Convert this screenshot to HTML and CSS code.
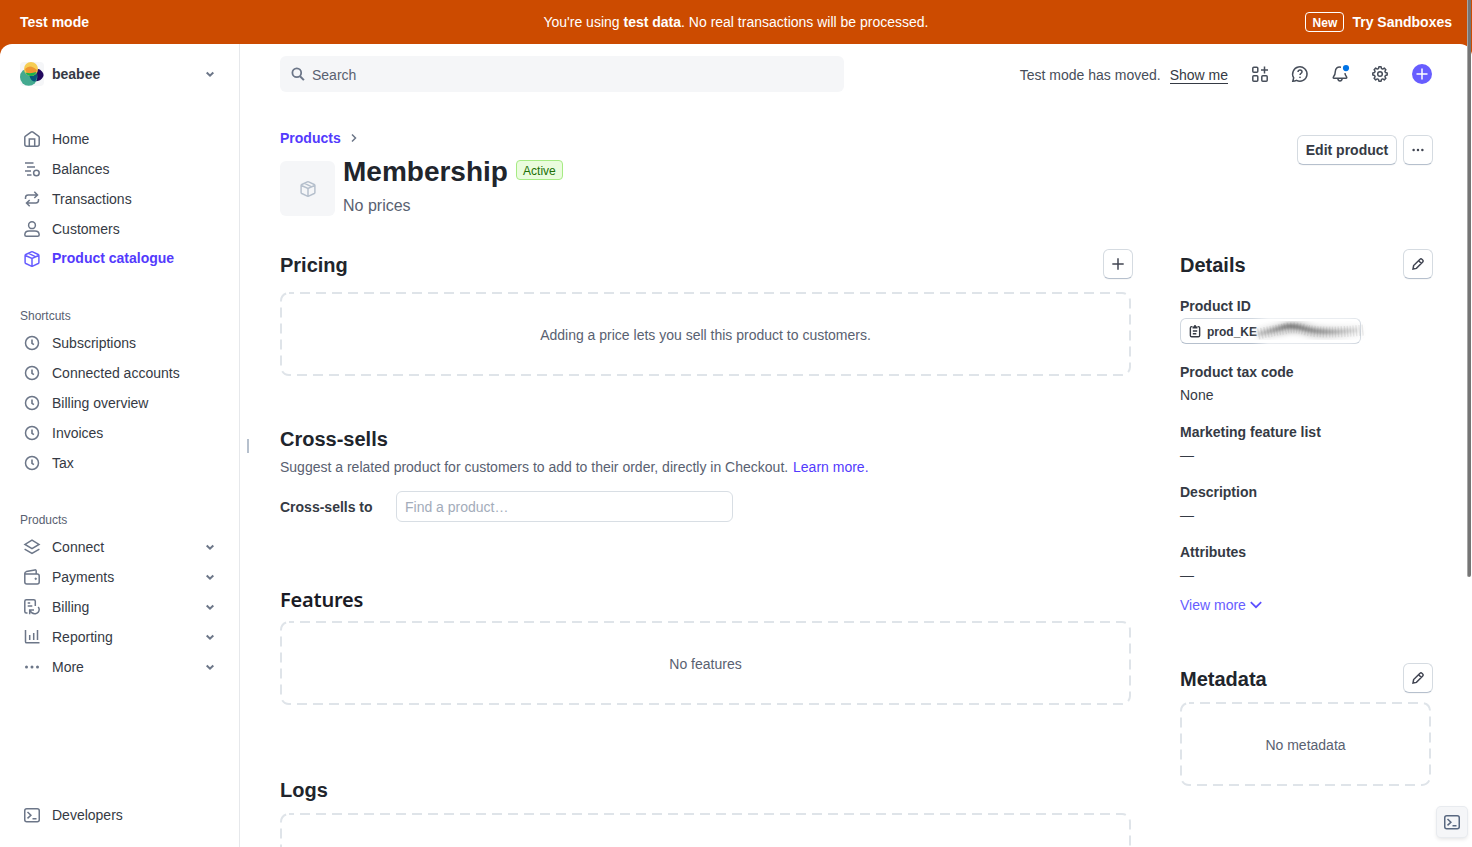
FILE: index.html
```html
<!DOCTYPE html>
<html lang="en">
<head>
<meta charset="utf-8">
<title>Membership – Products</title>
<link rel="stylesheet" href="styles.css">
</head>
<body>
<svg class="defs" width="0" height="0" aria-hidden="true">
  <symbol id="chev" viewBox="0 0 16 16"><path d="M4.700 6.500 8 9.700l3.300-3.200" stroke-width="2"/></symbol>
  <symbol id="clock" viewBox="0 0 16 16"><circle cx="8" cy="8" r="6.500"/><path d="M8 4.500V8.300l1.900 1.400" stroke-width="1.600"/></symbol>
  <symbol id="box" viewBox="0 0 16 16"><path d="M7.300.9Q8 .6 8.700.9L14.200 3.500Q14.900 3.900 14.900 4.600V11.400Q14.900 12.100 14.200 12.500L8.700 15.100Q8 15.400 7.300 15.100L1.800 12.500Q1.100 12.100 1.100 11.400V4.600Q1.100 3.900 1.800 3.500ZM1.400 4.500 8 7.500 14.600 4.500M8 7.500V15M4.600 2.300 11.300 5.600"/></symbol>
  <symbol id="term" viewBox="0 0 16 16"><rect x=".75" y="1.750" width="14.500" height="13" rx="2"/><path d="M3.500 5 6.900 8.200 3.500 11.400M8.500 11.700h4"/></symbol>
  <symbol id="pencil" viewBox="0 0 16 16"><path d="m2.300 13.700.7-3.900 7.300-7.200a1.500 1.500 0 0 1 2.200 0l.9.9a1.500 1.500 0 0 1 0 2.200l-7.200 7.300Zm6.200-9.600 3.400 3.400" stroke-width="1.700"/></symbol>
</svg>

<header class="banner">
  <b class="banner-mode">Test mode</b>
  <span class="banner-msg">You're using <b>test data</b>. No real transactions will be processed.</span>
  <span class="banner-cta"><b class="new-tag">New</b><b>Try Sandboxes</b></span>
</header>

<div class="app">
  <aside class="sidebar">
    <div class="account">
      <svg class="logo" viewBox="0 0 24 24"><rect width="24" height="24" rx="4" fill="#f5f6f8"/><path d="M15 7.500q4-2 7 2 2.500 3 1 5.500-2 4-8 4.500-3-6 0-12" fill="#22085e"/><circle cx="8.700" cy="15" r="8.700" fill="#43a98f"/><path d="M9.500 14 16.500 10.500q1.500 5-1.200 8.800-4 1-5.800-5.300" fill="#07577a"/><circle cx="11" cy="7" r="7" fill="#f6cd54"/><path d="M5 7q5-5.500 12 1-1 4-6 5-5-1.500-6-6" fill="#ef9632"/><path d="M5.500 10.500q5 1.500 11-.5-1.500 4-5.500 4-4-.3-5.500-3.500" fill="#17b34c"/></svg>
      <b>beabee</b><svg class="icon chev"><use href="#chev"/></svg>
    </div>
    <nav class="nav">
      <a class="item"><svg class="icon" viewBox="0 0 16 16"><path d="M.8 6.300Q.8 5.600 1.500 5.100L7 1.100q1-.7 2 0l5.500 4q.7.5.7 1.200V13.200q0 2-2 2H2.800q-2 0-2-2ZM5.300 15V8h5.400v7"/></svg>Home</a>
      <a class="item"><svg class="icon" viewBox="0 0 16 16"><path d="M1 2h8.500M3 6h8M1 10h6M3 14h4.500"/><circle cx="12.400" cy="12" r="2.800"/></svg>Balances</a>
      <a class="item"><svg class="icon" viewBox="0 0 16 16"><path d="M1.500 8V6.700Q1.500 4 4.200 4H13M10.300.8 13.500 4l-3.200 3M14.500 8v1.300q0 2.700-2.700 2.700H3M5.700 9 2.500 12l3.200 3.200"/></svg>Transactions</a>
      <a class="item"><svg class="icon" viewBox="0 0 16 16"><circle cx="8" cy="4.200" r="3.400"/><path d="M5 10h6q4 0 4.200 3.700 0 1.500-1.500 1.500H2.300q-1.500 0-1.500-1.500Q1 10 5 10Z"/></svg>Customers</a>
      <a class="item active"><svg class="icon"><use href="#box"/></svg><span>Product catalogue</span></a>
    </nav>
    <div class="label">Shortcuts</div>
    <nav>
      <a class="item"><svg class="icon"><use href="#clock"/></svg>Subscriptions</a>
      <a class="item"><svg class="icon"><use href="#clock"/></svg>Connected accounts</a>
      <a class="item"><svg class="icon"><use href="#clock"/></svg>Billing overview</a>
      <a class="item"><svg class="icon"><use href="#clock"/></svg>Invoices</a>
      <a class="item"><svg class="icon"><use href="#clock"/></svg>Tax</a>
    </nav>
    <div class="label">Products</div>
    <nav>
      <a class="item"><svg class="icon" viewBox="0 0 16 16"><path d="M8 1.200 15 5.400 8 9.600 1 5.400ZM.6 10.200 8 14.500l7.400-4.300"/></svg>Connect<svg class="icon chev"><use href="#chev"/></svg></a>
      <a class="item"><svg class="icon" viewBox="0 0 16 16"><path d="M.8 5h12.400q2 0 2 2v6q0 2-2 2H2.800q-2 0-2-2V4.500Q.8 3 2.300 2.600L10.800.9Q12.200.7 12.200 2v3"/><circle cx="11.700" cy="9.800" r=".8" fill="currentColor" stroke-width=".8"/></svg>Payments<svg class="icon chev"><use href="#chev"/></svg></a>
      <a class="item"><svg class="icon" viewBox="0 0 16 16"><path d="M3.500 14H2.300Q.8 14 .8 12.500V2.300Q.8.8 2.300.8h7.500q1.500 0 1.500 1.500V7M3.700 4h2.500M3.700 7h4.600M10 11H5.700v4.300M6 11.500q1.700 3.700 5.500 3.200 3.500-.7 3.700-4.200 0-1.200-1-2.500"/></svg>Billing<svg class="icon chev"><use href="#chev"/></svg></a>
      <a class="item"><svg class="icon" viewBox="0 0 16 16"><path d="M1.500 1v11.700q0 1.100 1.100 1.100H15.500M5.700 6v5M9.700 4v7M13.500 1v10"/></svg>Reporting<svg class="icon chev"><use href="#chev"/></svg></a>
      <a class="item"><svg class="icon solid" viewBox="0 0 16 16"><circle cx="2.500" cy="8" r="1.500"/><circle cx="8" cy="8" r="1.500"/><circle cx="13.500" cy="8" r="1.500"/></svg>More<svg class="icon chev"><use href="#chev"/></svg></a>
    </nav>
    <a class="item developers"><svg class="icon"><use href="#term"/></svg>Developers</a>
  </aside>
  <div class="resizer"></div>

  <main class="main">
    <div class="topbar">
      <div class="search"><svg class="icon" viewBox="0 0 16 16"><circle cx="6.800" cy="6.800" r="4.400" stroke-width="1.800"/><path d="m10 10.200 3.900 3.900" stroke-width="2"/></svg>Search</div>
      <div class="tools">
        <span class="moved">Test mode has moved.</span><a class="show">Show me</a>
        <svg class="icon t1" viewBox="0 0 16 16"><rect x=".8" y="1.300" width="5" height="5" rx="1"/><rect x=".8" y="9.800" width="5" height="5.400" rx="1"/><rect x="9.800" y="9.800" width="5.400" height="5.400" rx="1"/><path d="M12.500.5v7M9 4h7"/></svg>
        <svg class="icon" viewBox="0 0 16 16"><path d="M.8 15.200 1.700 11.800A7.200 7.200 0 1 1 4.500 14.400Q3 15.200.8 15.200Z"/><path d="M6 6q.2-2 2-2 2 0 2 1.800 0 1-1 1.500T8 9"/><circle cx="8" cy="11.300" r=".5" fill="currentColor" stroke-width=".8"/></svg>
        <svg class="icon" viewBox="0 0 16 16"><path d="M9 1.200Q3.600.3 3.300 5.500 3.300 8.700 1.500 10.800.7 12.200 2 12.200H14q1.300 0 .5-1.400-1.300-1.600-1.600-3.600M5.800 12.700q.4 2.400 2.200 2.400t2.200-2.400"/><circle cx="14" cy="2.100" r="3.100" fill="#0073e6" stroke="none"/></svg>
        <svg class="icon" viewBox="0 0 16 16"><path d="M6.500 2.600 6.900.8h2.200l.4 1.800 1.200.5 1.600-1 1.600 1.600-1 1.600.5 1.200 1.800.4v2.200l-1.800.4-.5 1.200 1 1.600-1.600 1.600-1.600-1-1.200.5-.4 1.800H6.900l-.4-1.800-1.200-.5-1.600 1-1.600-1.600 1-1.600-.5-1.200L.8 9.100V6.900l1.800-.4.500-1.200-1-1.600 1.600-1.600 1.600 1Z" stroke-linejoin="round"/><circle cx="8" cy="8" r="2.300"/></svg>
        <svg class="create" viewBox="0 0 20 20"><circle cx="10" cy="10" r="10" fill="#675dff"/><path d="M10 4.500v11M4.500 10h11" stroke="#fff" stroke-width="1.500"/></svg>
      </div>
    </div>

    <div class="page-head">
      <div>
        <div class="crumbs"><b>Products</b><svg viewBox="0 0 8 10"><path d="m2 1.500 3.500 3.500L2 8.500" fill="none" stroke="#6c7688" stroke-width="1.500"/></svg></div>
        <div class="product">
          <div class="thumb"><svg class="icon"><use href="#box"/></svg></div>
          <div>
            <div class="title-row"><h1>Membership</h1><span class="badge">Active</span></div>
            <div class="prices">No prices</div>
          </div>
        </div>
      </div>
      <div class="actions"><button class="btn">Edit product</button><button class="btn square"><svg class="icon solid" viewBox="0 0 16 16"><circle cx="3" cy="8" r="1.400"/><circle cx="8" cy="8" r="1.400"/><circle cx="13" cy="8" r="1.400"/></svg></button></div>
    </div>

    <div class="columns">
      <div class="left">
        <section class="pricing">
          <div class="head"><h2>Pricing</h2><button class="btn square"><svg class="icon" viewBox="0 0 16 16"><path d="M8 1.500v13M1.500 8h13" stroke-width="1.700"/></svg></button></div>
          <div class="empty"><svg><rect x="1" y="1" rx="8"/></svg><span>Adding a price lets you sell this product to customers.</span></div>
        </section>
        <section class="cross">
          <h2>Cross-sells</h2>
          <p>Suggest a related product for customers to add to their order, directly in Checkout. <a>Learn more.</a></p>
          <div class="field"><b>Cross-sells to</b><div class="input">Find a product…</div></div>
        </section>
        <section class="features">
          <h2 class="alt">Features</h2>
          <div class="empty"><svg><rect x="1" y="1" rx="8"/></svg><span>No features</span></div>
        </section>
        <section class="logs">
          <h2>Logs</h2>
          <div class="empty"><svg><rect x="1" y="1" rx="8"/></svg></div>
        </section>
      </div>
      <div class="right">
        <div class="head"><h2>Details</h2><button class="btn square"><svg class="icon"><use href="#pencil"/></svg></button></div>
        <dl>
          <dt>Product ID</dt>
          <dd class="id-row"><span class="pill"><svg class="icon" viewBox="0 0 16 16"><path d="M5 3H4.200Q2.700 3 2.700 4.500v8.600Q2.700 14.600 4.200 14.600h7.600q1.500 0 1.500-1.500V4.500Q13.300 3 11.800 3H11M5.500 8h5M5.500 11.200h4" stroke-width="1.600"/><path d="M5.200 5V2.800H6.500Q7 1.200 8 1.200t1.500 1.600h1.300V5Z" fill="currentColor" stroke="none"/></svg><span>prod_KE</span></span>
            <svg class="smudge" viewBox="0 0 116 36">
              <defs>
                <filter id="soft" x="-20%" y="-80%" width="140%" height="260%"><feGaussianBlur stdDeviation="2.800"/></filter>
                <filter id="fine" x="-20%" y="-80%" width="140%" height="260%"><feGaussianBlur stdDeviation="1.600"/></filter>
                <linearGradient id="veil"><stop offset="0" stop-color="#fff" stop-opacity="0"/><stop offset=".15" stop-color="#fff" stop-opacity=".7"/><stop offset=".9" stop-color="#fff" stop-opacity=".55"/><stop offset="1" stop-color="#fff" stop-opacity=".3"/></linearGradient>
                <linearGradient id="ink" gradientUnits="userSpaceOnUse" x1="0" y1="0" x2="116" y2="0"><stop offset="0" stop-color="#555" stop-opacity=".15"/><stop offset=".35" stop-color="#444" stop-opacity=".75"/><stop offset=".65" stop-color="#555" stop-opacity=".55"/><stop offset="1" stop-color="#888" stop-opacity=".12"/></linearGradient>
              </defs>
              <rect x="2" y="3" width="108" height="30" fill="url(#veil)" filter="url(#fine)"/>
              <path d="M6 21Q20 19 32 16 44 12 58 17 74 22 112 17" fill="none" stroke="url(#ink)" stroke-width="12" opacity=".4" filter="url(#soft)"/>
              <path d="M8 21Q22 18 34 14 44 12 56 16 74 21 108 17" fill="none" stroke="url(#ink)" stroke-width="4.500" opacity=".75" filter="url(#fine)"/>
              <path d="M8 21Q22 18 34 16 44 13 56 17 74 21 114 17" fill="none" stroke="#666" stroke-width="11" stroke-dasharray="1.300 1.700" opacity=".12"/>
            </svg>
          </dd>
          <dt class="tax">Product tax code</dt><dd>None</dd>
          <dt>Marketing feature list</dt><dd>—</dd>
          <dt>Description</dt><dd>—</dd>
          <dt>Attributes</dt><dd>—</dd>
        </dl>
        <a class="more">View more<svg viewBox="0 0 12 8"><path d="m.8 1.200 5.200 5 5.200-5" fill="none" stroke="#5b4fff" stroke-width="1.700"/></svg></a>
        <div class="head meta"><h2>Metadata</h2><button class="btn square"><svg class="icon"><use href="#pencil"/></svg></button></div>
        <div class="empty"><svg><rect x="1" y="1" rx="8"/></svg><span>No metadata</span></div>
      </div>
    </div>
  </main>
</div>
<button class="console"><svg class="icon"><use href="#term"/></svg></button>
<div class="scrollbar"></div>
</body>
</html>
```
FILE: styles.css
```css
* { box-sizing: border-box; }
body { margin: 0; height: 847px; overflow: hidden; display: flex; flex-direction: column; background: #cc4b00; color: #353a44; font: 14px/20px "Liberation Sans", Arial, sans-serif; }
h1, h2, p, dl, dd { margin: 0; }
.defs { position: absolute; }
.icon { width: 16px; height: 16px; flex: none; display: block; overflow: visible; fill: none; stroke: currentColor; stroke-width: 1.5; }
.icon.solid { fill: currentColor; stroke: none; }

.banner { height: 44px; flex: none; display: grid; grid-template-columns: 1fr auto 1fr; align-items: center; padding: 0 20px; color: #fff; }
.banner-cta { display: flex; justify-content: flex-end; align-items: center; gap: 8px; }
.new-tag { width: 39px; height: 20px; border: 1px solid #fff; border-radius: 4px; font-size: 12px; line-height: 20px; text-align: center; }

.app { flex: 1; min-height: 0; display: flex; background: #fff; border-radius: 12px 12px 0 0; overflow: hidden; }
.sidebar { width: 240px; flex: none; display: flex; flex-direction: column; padding: 0 20px 17px; border-right: 1px solid #e6e8eb; }
.account { height: 60px; display: flex; align-items: center; gap: 8px; }
.logo { width: 24px; height: 24px; }
.chev { margin-left: auto; margin-right: 1px; color: #6c7688; }
.nav { margin-top: 20px; }
.item { height: 30px; display: flex; align-items: center; padding-left: 4px; }
.item > .icon:first-child { margin-right: 12px; color: #6c7688; }
.item.active { color: #533afd; font-weight: 700; }
.item.active > .icon:first-child { color: #675dff; }
.item.active span { margin-top: -2px; }
.label { margin-top: 30px; height: 24px; line-height: 24px; font-size: 12px; color: #596171; }
.developers { margin-top: auto; }
.resizer { width: 2px; height: 14px; margin: 395px 0 0 7px; background: #b6c0cd; flex: none; }

.main { flex: 1; min-width: 0; padding: 12px 39px 0 31px; }
.topbar { display: flex; height: 36px; justify-content: space-between; align-items: center; }
.search { width: 564px; height: 36px; padding: 2px 10px 0; display: flex; align-items: center; gap: 6px; border-radius: 6px; background: #f5f6f8; color: #596171; }
.search .icon { color: #6c7688; margin-top: -2px; }
.tools { display: flex; align-items: center; gap: 24px; color: #474e5a; }
.moved { margin: 2px -15px 0 0; }
.show { margin-top: 2px; line-height: 16px; border-bottom: 1px solid #353a44; color: #353a44; }
.create { width: 20px; height: 20px; margin-right: 1px; }

.page-head { display: flex; justify-content: space-between; margin-top: 36px; height: 121px; }
.crumbs { display: flex; align-items: center; gap: 9px; height: 20px; color: #533afd; }
.crumbs svg { width: 8px; height: 10px; }
.product { display: flex; gap: 8px; margin-top: 7px; }
.thumb { width: 55px; height: 55px; margin-top: 6px; border-radius: 6px; background: #f5f6f8; display: grid; place-items: center; color: #b6c0cd; }
.title-row { display: flex; align-items: center; gap: 8px; height: 34px; color: #21252c; }
h1 { font-size: 28px; line-height: 34px; }
.badge { width: 47px; height: 20px; margin-top: -4px; border: 1px solid #a6eb84; border-radius: 4px; background: #eafcdd; color: #217005; font-size: 12px; line-height: 20px; text-align: center; }
.prices { font-size: 16px; line-height: 24px; margin-top: 5px; color: #596171; }
.actions { display: flex; gap: 6px; margin-top: 7px; }
.btn { height: 30px; width: 100px; padding: 0; display: grid; place-items: center; background: #fff; border: 1px solid #d5dbe1; border-bottom-color: #b6c0cd; border-radius: 6px; font: bold 14px "Liberation Sans", Arial, sans-serif; color: #353a44; box-shadow: 0 1px 1px rgba(0,0,0,.03); }
.btn.square { width: 30px; }
.btn .icon { color: #414552; width: 14px; height: 14px; }

.columns { display: grid; grid-template-columns: 853px 253px; column-gap: 47px; }
h2 { font-size: 20px; line-height: 28px; color: #21252c; }
h2.alt { font-family: "Noto Sans", sans-serif; font-weight: 600; color: #1a1b25; letter-spacing: -.2px; }
.head { display: flex; justify-content: space-between; align-items: center; height: 30px; }
.head h2 { padding-top: 2px; }
.empty { position: relative; width: calc(100% - 2px); height: 84px; padding-top: 2px; display: grid; place-items: center; color: #596171; }
.empty svg { position: absolute; inset: 0; width: 100%; height: 100%; }
.empty rect { width: calc(100% - 2px); height: calc(100% - 2px); fill: none; stroke: #dfe4e9; stroke-width: 2; stroke-dasharray: 10 6; stroke-dashoffset: 5; }
.pricing .empty { margin-top: 13px; }
.cross { margin-top: 49px; }
.cross p { margin-top: 4px; color: #596171; }
.cross a { color: #533afd; margin-left: 1px; }
.field { display: flex; align-items: center; margin-top: 14px; height: 31px; }
.field b { width: 116px; }
.input { width: 337px; height: 31px; border: 1px solid #d8dee4; border-radius: 6px; padding-left: 8px; line-height: 30px; color: #a3acba; }
.features { margin-top: 64px; }
.features .empty { margin-top: 7px; }
.logs { margin-top: 71px; }
.logs .empty { margin-top: 9px; }

.right { min-width: 0; }
dl { margin-top: 17px; }
dt { font-weight: 700; height: 23px; margin-top: 17px; }
dt:first-child { margin-top: 0; height: 22px; }
dd { height: 20px; }
dt.tax { margin-top: 18px; }
.id-row { position: relative; height: 26px; }
.pill { width: 181px; height: 26px; display: flex; align-items: center; gap: 5px; padding-left: 7px; border: 1px solid #d0d7df; border-bottom-color: #b6c0cd; border-radius: 6px; font-weight: 700; font-size: 12px; }
.pill .icon { width: 14px; height: 14px; }
.pill span { padding-top: 2px; }
.smudge { position: absolute; left: 70px; top: -5px; width: 116px; height: 36px; }
.more { display: flex; align-items: center; gap: 4px; margin-top: 10px; color: #675dff; }
.more svg { width: 12px; height: 8px; }
.meta { margin: 48px 0 9px; }

.console { position: absolute; left: 1437px; top: 807px; width: 30px; height: 30px; padding: 0; display: grid; place-items: center; border: 0; border-radius: 4px; background: #f5f6f8; color: #596880; box-shadow: 0 0 0 1px #e8ebef, 0 2px 4px rgba(0,0,0,.12); }
.scrollbar { position: absolute; left: 1467px; top: -4px; width: 4px; height: 581px; border-radius: 2px; background: #757575; border-left: 1px solid #a7a7a7; }
```
